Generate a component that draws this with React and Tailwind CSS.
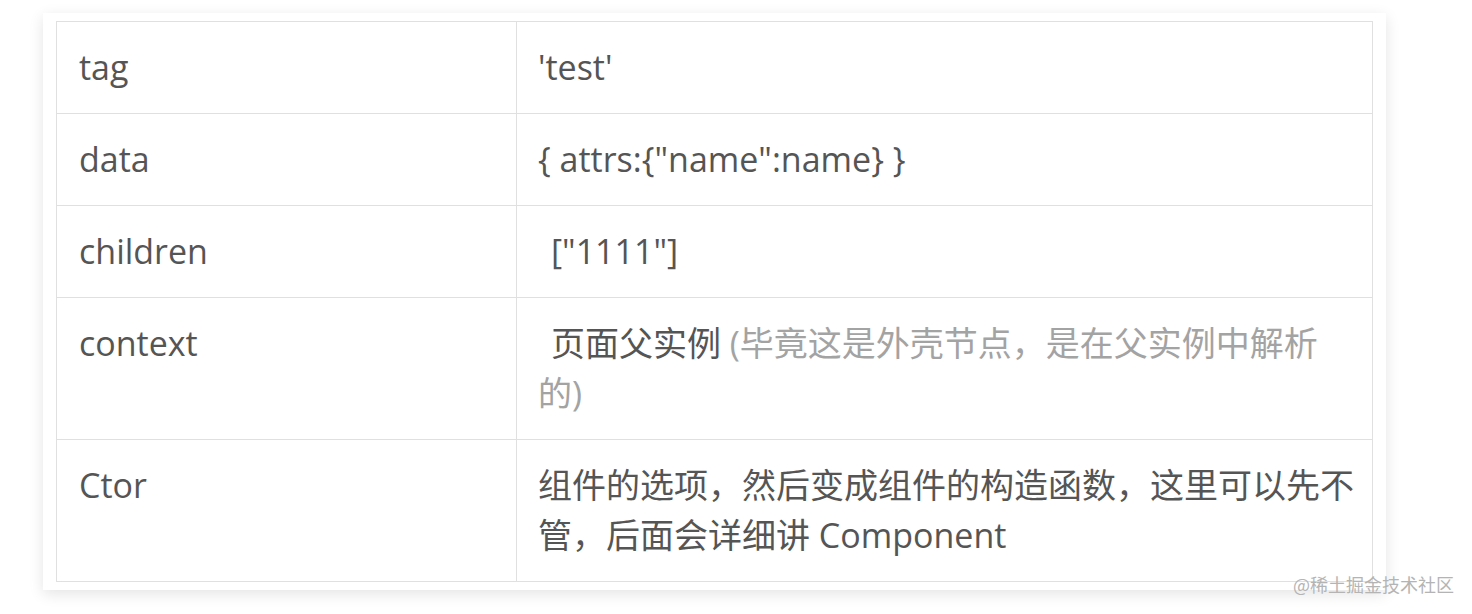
import React from 'react';

const rows = [
  { key: 'tag', value: <span>'test'</span> },
  { key: 'data', value: <span>{'{ attrs:{"name":name} }'}</span> },
  { key: 'children', value: <span className="pl-[13px]">["1111"]</span> },
  {
    key: 'context',
    value: (
      <>
        <span className="pl-[13px]">页面父实例</span>
        <span className="text-[#a3a3a3]"> (毕竟这是外壳节点，是在父实例中解析的)</span>
      </>
    ),
  },
  {
    key: 'Ctor',
    value: <span>组件的选项，然后变成组件的构造函数，这里可以先不管，后面会详细讲 Component</span>,
  },
];

const App = () => {
  return (
    <div className="relative w-[1472px] h-[614px] bg-white overflow-hidden">
      <div className="ml-[43px] mt-[13px] w-[1343px] bg-white px-[13px] py-[8px] shadow-[0_4px_14px_rgba(0,0,0,0.11)]">
        <table
          className="w-[1317px] border-collapse table-fixed text-[34px] leading-[50px] text-[#555]"
          style={{ fontFamily: '"Open Sans", "Noto Sans CJK SC", sans-serif' }}
        >
          <colgroup>
            <col className="w-[460px]" />
            <col />
          </colgroup>
          <tbody>
            {rows.map((row) => (
              <tr key={row.key}>
                <td className="border border-[#e0e0e0] pl-[22px] pt-[20px] pb-[21px] align-top">
                  {row.key}
                </td>
                <td className="border border-[#e0e0e0] pl-[21px] pr-[16px] pt-[20px] pb-[21px] align-top">
                  {row.value}
                </td>
              </tr>
            ))}
          </tbody>
        </table>
      </div>
      <div
        className="absolute left-[1293px] top-[571px] text-[18px] leading-[26px] text-[#b4b4b4]"
        style={{ fontFamily: '"Noto Sans CJK SC", sans-serif' }}
      >
        @稀土掘金技术社区
      </div>
    </div>
  );
};

export default App;
